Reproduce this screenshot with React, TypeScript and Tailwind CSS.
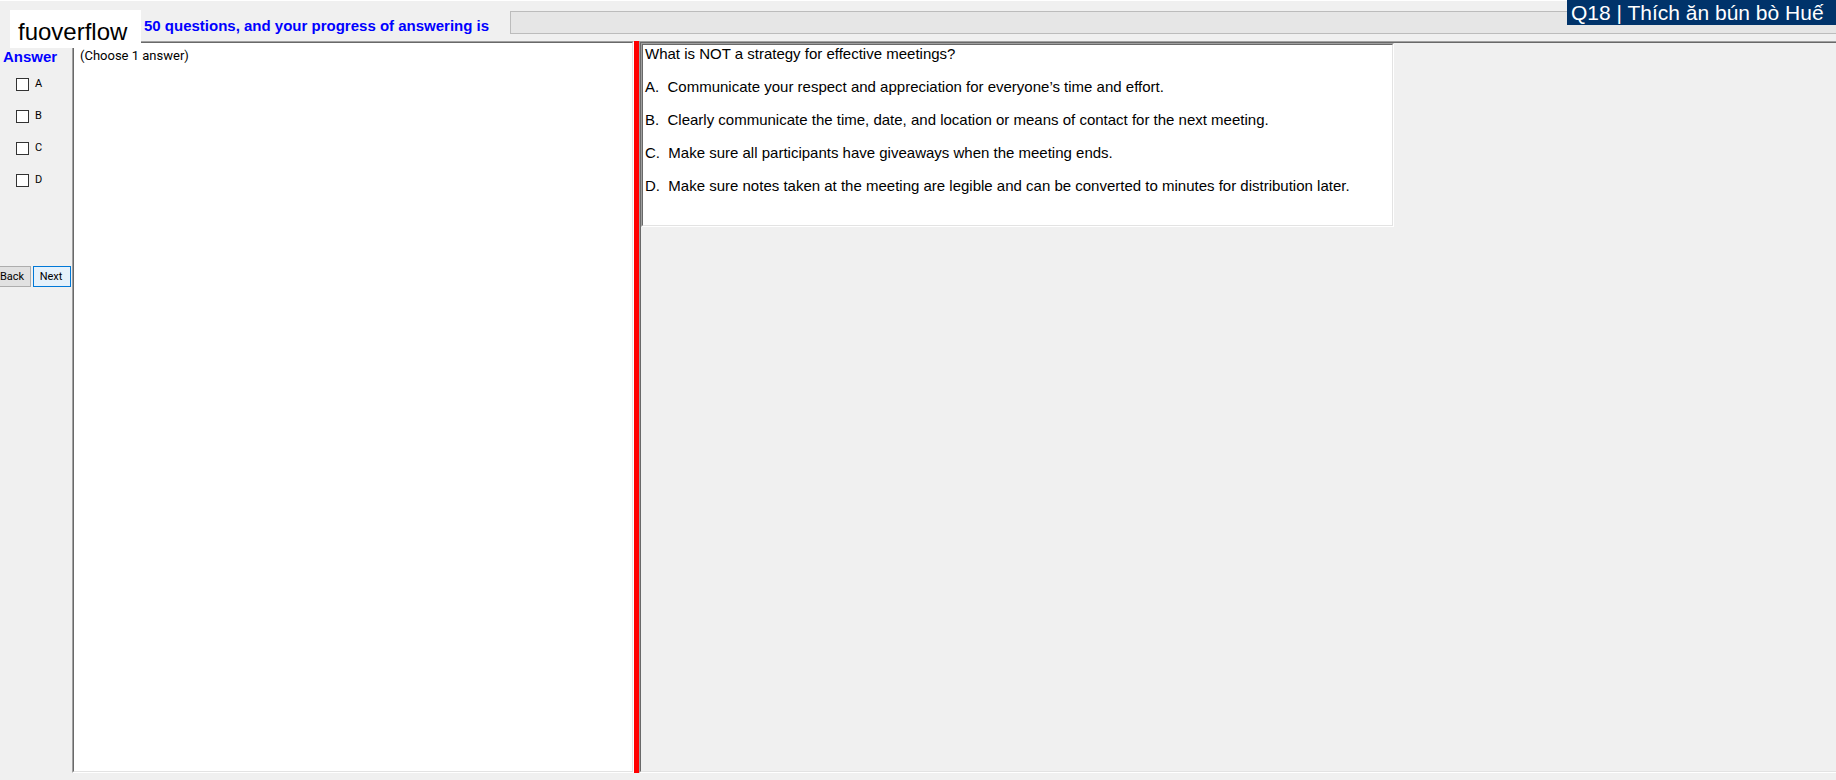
import React from "react";

const letters = ["A", "B", "C", "D"];

const choices = [
  "A.\u00a0 Communicate your respect and appreciation for everyone’s time and effort.",
  "B.\u00a0 Clearly communicate the time, date, and location or means of contact for the next meeting.",
  "C.\u00a0 Make sure all participants have giveaways when the meeting ends.",
  "D.\u00a0 Make sure notes taken at the meeting are legible and can be converted to minutes for distribution later.",
];

function Sunken({ className, children }: { className: string; children?: React.ReactNode }) {
  return (
    <div className={`border-t border-l border-t-[#a0a0a0] border-l-[#a0a0a0] ${className}`}>
      {children}
    </div>
  );
}

function Header() {
  return (
    <header className="flex h-[41px] items-start border-t border-white pt-[10px] pl-[144px]">
      <p className="w-[366px] shrink-0 pt-[7px] font-['Liberation_Sans',sans-serif] text-[15px] leading-4 font-bold whitespace-nowrap text-[#0000ff]">
        50 questions, and your progress of answering is
      </p>
      <div
        role="progressbar"
        aria-label="Progress"
        aria-valuenow={0}
        className="h-[23px] flex-1 border border-r-0 border-[#bcbcbc] bg-[#e6e6e6]"
      />
    </header>
  );
}

function AnswerPanel() {
  return (
    <aside className="flex flex-col overflow-hidden font-['Roboto',sans-serif] text-[11px] text-black">
      <h2 className="pt-2 pl-[3px] font-['Liberation_Sans',sans-serif] text-[15px] leading-4 font-bold text-[#0000ff]">
        Answer
      </h2>
      <div className="flex flex-col gap-4 pt-[11px] pl-4">
        {letters.map((letter) => (
          <label key={letter} className="flex h-4 items-start gap-[6px] leading-4">
            <input
              type="checkbox"
              name={letter}
              className="mt-[2px] size-[13px] appearance-none border border-[#333333] bg-white checked:bg-[#333333]"
            />
            {letter}
          </label>
        ))}
      </div>
      <div className="flex gap-[2px] pt-[78px] leading-4">
        <button type="button" className="h-[21px] w-[31px] border border-l-0 border-[#adadad] bg-[#e1e1e1] pr-[8px]">
          Back
        </button>
        <button type="button" className="h-[21px] w-[38px] border border-[#0078d7] bg-[#e5f1fb] pr-[2px]">
          Next
        </button>
      </div>
    </aside>
  );
}

export default function App() {
  return (
    <div className="relative flex min-h-screen flex-col overflow-hidden bg-[#f0f0f0] pb-[7px] text-black">
      <Header />
      <main className="grid flex-1 grid-cols-[72px_562fr_5px_1197fr]">
        <AnswerPanel />
        <Sunken className="border-r border-b border-r-white border-b-white">
          <div className="h-full border border-t-[#696969] border-r-[#e3e3e3] border-b-[#e3e3e3] border-l-[#696969] bg-white pt-1 pl-[6px] font-['Roboto',sans-serif] text-[13px] leading-[18px]">
            (Choose 1 answer)
          </div>
        </Sunken>
        <div className="bg-[#ff0000]" />
        <Sunken className="border-b border-b-white">
          <div className="h-full border border-r-0 border-t-[#696969] border-b-[#e3e3e3] border-l-[#696969]">
            <Sunken className="w-[753px] max-w-full border-r border-b border-r-white border-b-white">
              <div className="flex flex-col gap-[15px] border border-t-[#696969] border-r-[#e3e3e3] border-b-[#e3e3e3] border-l-[#696969] bg-white pb-[30px] pl-[2px] font-['Liberation_Sans',sans-serif] text-[15px] leading-[18px]">
                <p>What is NOT a strategy for effective meetings?</p>
                {choices.map((choice) => (
                  <p key={choice}>{choice}</p>
                ))}
              </div>
            </Sunken>
          </div>
        </Sunken>
      </main>
      <div className="absolute top-[10px] left-[10px] h-[38px] w-[131px] bg-white pt-[6px] pl-2 font-['Liberation_Sans',sans-serif] text-[24px] leading-8">
        fuoverflow
      </div>
      <div className="absolute top-0 right-0 h-[25px] w-[269px] bg-[#00336a] pl-1 font-['Liberation_Sans',sans-serif] text-[21px] leading-[25px] whitespace-nowrap text-white">
        Q18 | Thích ăn bún bò Huế
      </div>
    </div>
  );
}
